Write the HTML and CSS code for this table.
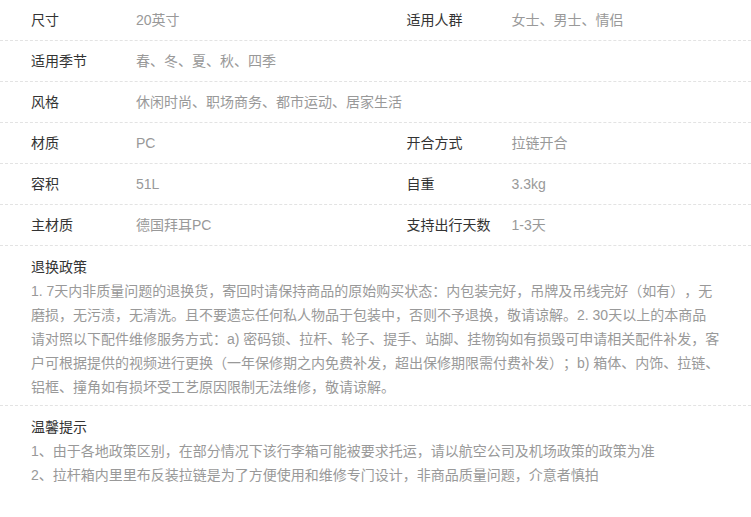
FILE: index.html
```html
<!DOCTYPE html>
<html>
<head>
    <meta charset="utf-8">
    <title>商品参数</title>
    <meta name="viewport" content="width=device-width, initial-scale=1">
    <link rel="stylesheet" href="styles.css">
</head>
<body>
    <div class="specs">
        <div class="spec-row">
            <div class="spec-cell"><span class="spec-label">尺寸</span><span class="spec-value">20英寸</span></div>
            <div class="spec-cell"><span class="spec-label">适用人群</span><span class="spec-value">女士、男士、情侣</span></div>
        </div>
        <div class="spec-row">
            <div class="spec-cell"><span class="spec-label">适用季节</span><span class="spec-value">春、冬、夏、秋、四季</span></div>
        </div>
        <div class="spec-row">
            <div class="spec-cell wide"><span class="spec-label">风格</span><span class="spec-value">休闲时尚、职场商务、都市运动、居家生活</span></div>
        </div>
        <div class="spec-row">
            <div class="spec-cell"><span class="spec-label">材质</span><span class="spec-value">PC</span></div>
            <div class="spec-cell"><span class="spec-label">开合方式</span><span class="spec-value">拉链开合</span></div>
        </div>
        <div class="spec-row">
            <div class="spec-cell"><span class="spec-label">容积</span><span class="spec-value">51L</span></div>
            <div class="spec-cell"><span class="spec-label">自重</span><span class="spec-value">3.3kg</span></div>
        </div>
        <div class="spec-row">
            <div class="spec-cell"><span class="spec-label">主材质</span><span class="spec-value">德国拜耳PC</span></div>
            <div class="spec-cell"><span class="spec-label">支持出行天数</span><span class="spec-value">1-3天</span></div>
        </div>
    </div>

    <div class="notice">
        <h3 class="notice-title">退换政策</h3>
        <p class="notice-text">1. 7天内非质量问题的退换货，寄回时请保持商品的原始购买状态：内包装完好，吊牌及吊线完好（如有），无<br>磨损，无污渍，无清洗。且不要遗忘任何私人物品于包装中，否则不予退换，敬请谅解。2. 30天以上的本商品<br>请对照以下配件维修服务方式：a) 密码锁、拉杆、轮子、提手、站脚、挂物钩如有损毁可申请相关配件补发，客<br>户可根据提供的视频进行更换（一年保修期之内免费补发，超出保修期限需付费补发）；b) 箱体、内饰、拉链、<br>铝框、撞角如有损坏受工艺原因限制无法维修，敬请谅解。</p>
    </div>

    <div class="notice last">
        <h3 class="notice-title">温馨提示</h3>
        <p class="notice-text">1、由于各地政策区别，在部分情况下该行李箱可能被要求托运，请以航空公司及机场政策的政策为准</p>
        <p class="notice-text">2、拉杆箱内里里布反装拉链是为了方便使用和维修专门设计，非商品质量问题，介意者慎拍</p>
    </div>
</body>
</html>
```

FILE: styles.css
```css
body {
    margin: 0;
    background: #fff;
    font-family: "Liberation Sans", "Noto Sans CJK SC", sans-serif;
    font-size: 14px;
    color: #333;
    text-spacing-trim: space-all;
}

.spec-row {
    display: flex;
    height: 40px;
    border-bottom: 1px dashed #e3e3e3;
}

.spec-cell {
    flex: 0 0 50%;
    display: flex;
    align-items: center;
    padding-left: 31px;
    box-sizing: border-box;
    line-height: 40px;
}

.spec-cell.wide {
    flex-basis: 100%;
}

.spec-label {
    width: 105px;
    flex-shrink: 0;
    color: #333;
}

.spec-value {
    color: #999;
}

.notice {
    padding: 9px 20px 6px 31px;
    border-bottom: 1px dashed #e3e3e3;
}

.notice.last {
    border-bottom: none;
}

.notice-title {
    margin: 0;
    font-size: 14px;
    font-weight: normal;
    line-height: 24px;
    color: #333;
}

.notice-text {
    margin: 0;
    line-height: 24px;
    color: #999;
    white-space: nowrap;
}
```
